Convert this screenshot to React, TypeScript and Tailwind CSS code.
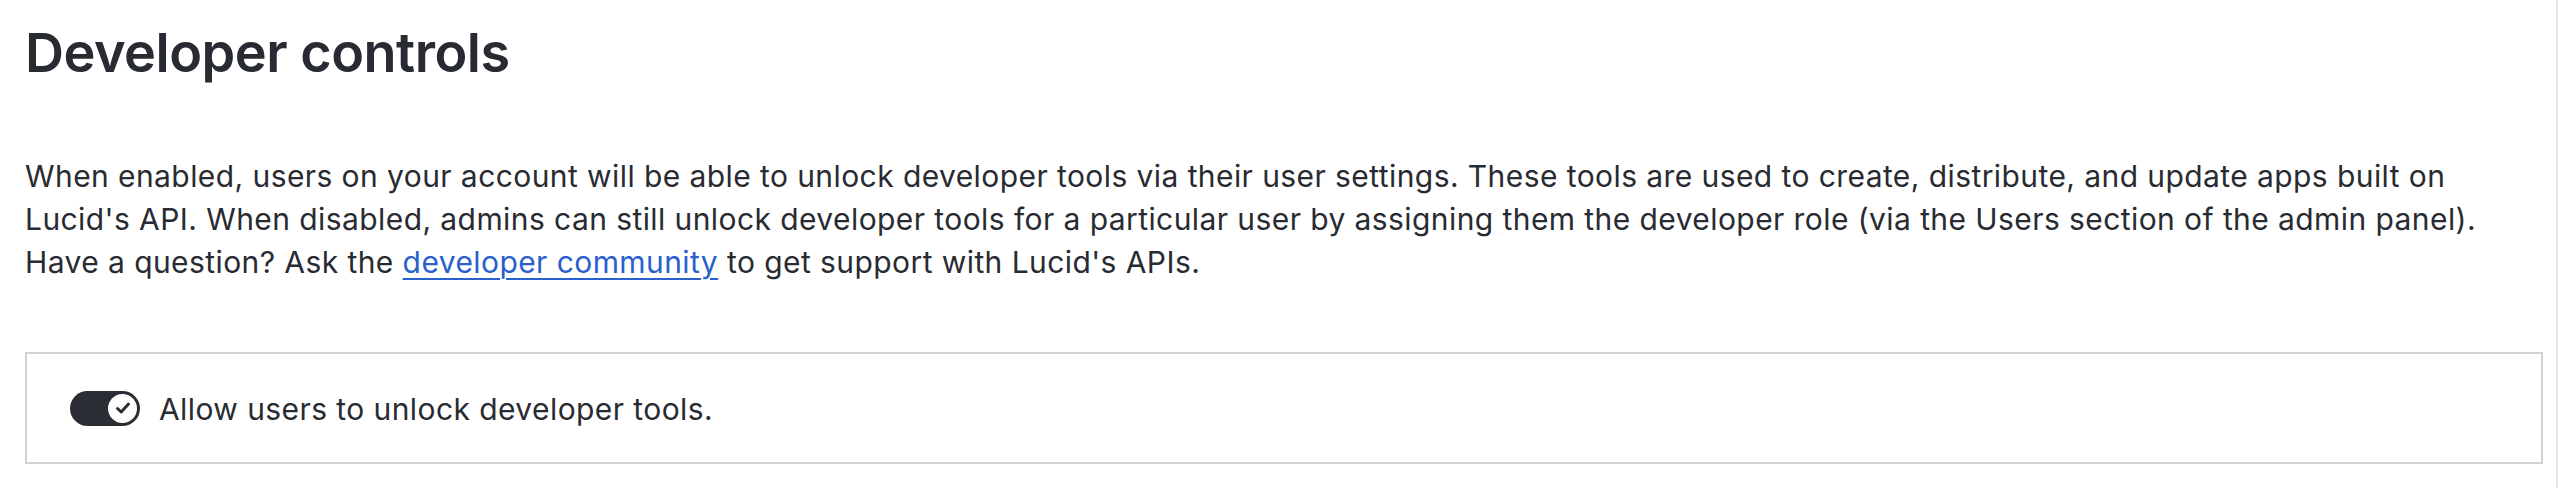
import React from "react";

export default function App() {
  return (
    <div className="w-[2560px] h-[488px] bg-white font-['Inter',sans-serif] text-[#282b31]">
      <div className="w-[2558px] h-full border-r-2 border-[#e6e6e8] pl-[25px] pr-[13px] pt-[17px]">
        <h1 className="text-[54px] font-semibold leading-[72px] tracking-[-0.5px]">Developer controls</h1>
        <p className="mt-[66px] text-[30px] leading-[43px] tracking-[0.42px]">
          When enabled, users on your account will be able to unlock developer tools via their user settings. These tools are used to create, distribute, and update apps built on Lucid's API. When disabled, admins can still unlock developer tools for a particular user by assigning them the developer role (via the Users section of the admin panel). Have a question? Ask the{" "}
          <a href="#" className="text-[#2a5fce] underline decoration-[2px] underline-offset-[5px]">developer community</a>{" "}
          to get support with Lucid's APIs.
        </p>
        <div className="mt-[68px] h-[112px] border-2 border-[#d0d1d5] flex items-center pl-[43px]">
          <div className="w-[70px] h-[35px] rounded-full bg-[#2a2d33] flex items-center justify-end pr-[3px]">
            <div className="w-[29px] h-[29px] rounded-full bg-white flex items-center justify-center">
              <svg width="18" height="18" viewBox="0 0 18 18" fill="none">
                <path d="M3.5 9.5 L7.2 13 L14.5 5" stroke="#2a2d33" strokeWidth="3" strokeLinecap="round" strokeLinejoin="round" />
              </svg>
            </div>
          </div>
          <span className="ml-[19px] pt-[3px] text-[30px] leading-[43px] tracking-[0.42px]">Allow users to unlock developer tools.</span>
        </div>
      </div>
    </div>
  );
}
